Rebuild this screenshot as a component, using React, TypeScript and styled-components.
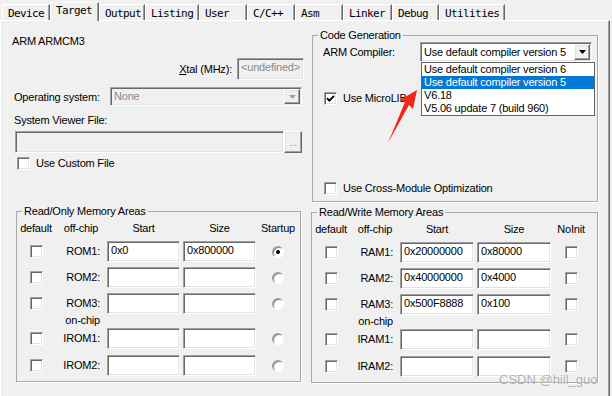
import React from "react";
import styled, { createGlobalStyle, css } from "styled-components";

const GlobalStyle = createGlobalStyle`
  html, body { margin: 0; padding: 0; background: #f0f0f0; }
  body {
    font-family: "Liberation Sans", Arial, sans-serif;
    font-size: 11px;
    letter-spacing: -0.2px;
    color: #000;
  }
  * { box-sizing: border-box; }
`;

const sunken = css`
  border: 1px solid;
  border-color: #a0a0a0 #fff #fff #a0a0a0;
  box-shadow: inset 1px 1px 0 #696969, inset -1px -1px 0 #e3e3e3;
`;

const raised = css`
  border: 1px solid;
  border-color: #fff #696969 #696969 #fff;
  box-shadow: inset -1px -1px 0 #a0a0a0, inset 1px 1px 0 #e3e3e3;
`;

const Window = styled.div`
  position: relative;
  width: 612px;
  height: 396px;
  overflow: hidden;
  background: #f0f0f0;
  display: flex;
  flex-direction: column;
`;

const TabBar = styled.div`
  display: flex;
  align-items: flex-end;
  height: 20px;
  padding-left: 2px;
  position: relative;
  z-index: 1;
`;

const Tab = styled.div<{ $w: number; $active?: boolean }>`
  width: ${(p) => p.$w}px;
  height: ${(p) => (p.$active ? 19 : 16)}px;
  margin-bottom: ${(p) => (p.$active ? -1 : 0)}px;
  padding: ${(p) => (p.$active ? 0 : 1)}px 0 0 5px;
  border-top: 1px solid #fff;
  border-left: 1px solid #fff;
  border-right: 1px solid #696969;
  box-shadow: inset -1px 0 0 #a0a0a0;
  background: #f0f0f0;
  font-family: "DejaVu Sans Mono", monospace;
  font-size: 11px;
  letter-spacing: -0.6px;
  line-height: 15px;
  white-space: nowrap;
`;

const Panel = styled.div`
  flex: 1;
  width: 610px;
  border-top: 1px solid #fff;
  border-left: 1px solid #fff;
  border-right: 1px solid #696969;
  box-shadow: inset -1px 0 0 #a0a0a0;
  display: grid;
  grid-template-columns: 305px 303px;
  grid-template-rows: 184px 1fr;
`;

const Section = styled.div<{ $pt: number; $pl: number }>`
  padding-top: ${(p) => p.$pt}px;
  padding-left: ${(p) => p.$pl}px;
  display: flex;
  flex-direction: column;
  align-items: flex-start;
`;

const Text = styled.div<{ $mt?: number; $pl?: number }>`
  margin-top: ${(p) => p.$mt ?? 0}px;
  padding-left: ${(p) => p.$pl ?? 0}px;
  line-height: 13px;
  height: 13px;
  white-space: nowrap;
`;

const XtalRow = styled.div`
  margin-top: 10px;
  align-self: stretch;
  display: flex;
  justify-content: flex-end;
  align-items: center;
  gap: 5px;
  padding-right: 2px;
  height: 22px;
`;

const FieldRow = styled.div<{ $mt: number; $pl: number; $h: number }>`
  margin-top: ${(p) => p.$mt}px;
  padding-left: ${(p) => p.$pl}px;
  height: ${(p) => p.$h}px;
  display: flex;
  align-items: center;
`;

const Label = styled.span<{ $w?: number }>`
  display: inline-block;
  width: ${(p) => (p.$w ? `${p.$w}px` : "auto")};
  white-space: nowrap;
`;

const Edit = styled.div<{ $w: number; $h: number; $disabled?: boolean }>`
  ${sunken};
  width: ${(p) => p.$w}px;
  height: ${(p) => p.$h}px;
  background: ${(p) => (p.$disabled ? "#f0f0f0" : "#fff")};
  color: ${(p) => (p.$disabled ? "#8a8a8a" : "#000")};
  padding: 2px 0 0 3px;
  line-height: 13px;
  white-space: nowrap;
  overflow: hidden;
`;

const BrowseButton = styled.div`
  ${raised};
  width: 18px;
  height: 22px;
  background: #f0f0f0;
  color: #9a9a9a;
  text-align: center;
  line-height: 22px;
  font-size: 10px;
`;

const Combo = styled.div<{ $w: number; $h: number; $disabled?: boolean }>`
  ${sunken};
  position: relative;
  width: ${(p) => p.$w}px;
  height: ${(p) => p.$h}px;
  display: flex;
  align-items: center;
  background: ${(p) => (p.$disabled ? "#f0f0f0" : "#fff")};
  color: ${(p) => (p.$disabled ? "#8a8a8a" : "#000")};
  padding: 0 1px 0 3px;
`;

const ComboText = styled.span`
  flex: 1;
  white-space: nowrap;
  overflow: hidden;
  line-height: 13px;
`;

const ComboButton = styled.div<{ $h: number }>`
  ${raised};
  width: 16px;
  height: ${(p) => p.$h}px;
  background: #f0f0f0;
  display: flex;
  align-items: center;
  justify-content: center;
`;

const DropList = styled.div`
  position: absolute;
  top: calc(100% + 1px);
  left: 0;
  width: 174px;
  border: 1px solid #646464;
  background: #fff;
  color: #000;
  z-index: 5;
`;

const DropItem = styled.div<{ $sel?: boolean }>`
  height: 13px;
  line-height: 12px;
  padding-left: 2px;
  white-space: nowrap;
  background: ${(p) => (p.$sel ? "#0078d7" : "#fff")};
  color: ${(p) => (p.$sel ? "#fff" : "#000")};
`;

const CheckRow = styled.div<{ $mt: number; $pl: number }>`
  margin-top: ${(p) => p.$mt}px;
  padding-left: ${(p) => p.$pl}px;
  display: flex;
  align-items: center;
  gap: 6px;
  height: 13px;
  line-height: 13px;
  white-space: nowrap;
`;

const CheckBoxBox = styled.span`
  ${sunken};
  width: 13px;
  height: 13px;
  background: #fff;
  display: inline-flex;
  align-items: center;
  justify-content: center;
  flex: none;
`;

const RadioBox = styled.span`
  width: 12px;
  height: 12px;
  border-radius: 50%;
  border: 1px solid;
  border-color: #a0a0a0 #fff #fff #a0a0a0;
  box-shadow: inset 1px 1px 0 #808080;
  background: #fff;
  display: inline-flex;
  align-items: center;
  justify-content: center;
`;

const RadioDot = styled.span`
  width: 4px;
  height: 4px;
  border-radius: 50%;
  background: #000;
`;

const Group = styled.fieldset<{ $w: number; $mt?: number }>`
  width: ${(p) => p.$w}px;
  min-width: 0;
  margin: ${(p) => p.$mt ?? 0}px 0 0 0;
  padding: 0;
  border: 1px solid #a9a9a9;
  box-shadow: 1px 1px 0 #fff;
`;

const Legend = styled.legend`
  margin-left: 5px;
  padding: 0 2px;
  line-height: 13px;
  height: 13px;
  white-space: nowrap;
`;

const GroupBody = styled.div<{ $pl?: number; $pb?: number }>`
  padding-left: ${(p) => p.$pl ?? 0}px;
  padding-bottom: ${(p) => p.$pb ?? 0}px;
  display: flex;
  flex-direction: column;
`;

const MemRow = styled.div<{ $cols: string; $h: number; $mt: number }>`
  display: grid;
  grid-template-columns: ${(p) => p.$cols};
  column-gap: 3px;
  align-items: center;
  height: ${(p) => p.$h}px;
  margin-top: ${(p) => p.$mt}px;
`;

const HeadCell = styled.div`
  text-align: center;
  line-height: 13px;
  white-space: nowrap;
`;

const RowLabel = styled.div`
  text-align: right;
  padding-right: 4px;
  line-height: 13px;
  white-space: nowrap;
`;

const Center = styled.div`
  display: flex;
  justify-content: center;
`;

const MemEdit = styled.div`
  ${sunken};
  height: 21px;
  background: #fff;
  padding: 2px 0 0 3px;
  line-height: 13px;
  white-space: nowrap;
  overflow: hidden;
`;

const ArrowSvg = styled.svg`
  position: absolute;
  left: 384px;
  top: 86px;
  width: 40px;
  height: 62px;
  pointer-events: none;
  z-index: 10;
`;

const Watermark = styled.div`
  position: absolute;
  left: 499px;
  top: 372px;
  font-size: 13px;
  letter-spacing: 0;
  line-height: 16px;
  color: rgba(150, 150, 150, 0.75);
  text-shadow: 0 0 1px rgba(255, 255, 255, 0.9);
  white-space: nowrap;
  z-index: 10;
`;

const Check = ({ checked }: { checked?: boolean }) => (
  <CheckBoxBox>
    {checked && (
      <svg width="9" height="9" viewBox="0 0 9 9">
        <polyline points="1,4.2 3.4,6.6 8,1.8" fill="none" stroke="#000" strokeWidth="1.9" />
      </svg>
    )}
  </CheckBoxBox>
);

const Radio = ({ checked }: { checked?: boolean }) => <RadioBox>{checked && <RadioDot />}</RadioBox>;

const DownArrow = ({ color }: { color: string }) => (
  <svg width="7" height="4" viewBox="0 0 7 4">
    <polygon points="0,0 7,0 3.5,4" fill={color} />
  </svg>
);

type MemEntry = { label: string; start?: string; size?: string; flag?: boolean };

const tabs = [
  { label: "Device", w: 48 },
  { label: "Target", w: 49 },
  { label: "Output", w: 46 },
  { label: "Listing", w: 54 },
  { label: "User", w: 48 },
  { label: "C/C++", w: 48 },
  { label: "Asm", w: 48 },
  { label: "Linker", w: 49 },
  { label: "Debug", w: 47 },
  { label: "Utilities", w: 66 },
];

const MemoryGroup = ({
  title,
  w,
  mt,
  cols,
  lastHeader,
  kind,
  offChip,
  onChip,
}: {
  title: string;
  w: number;
  mt?: number;
  cols: string;
  lastHeader: string;
  kind: "radio" | "check";
  offChip: MemEntry[];
  onChip: MemEntry[];
}) => {
  const row = (e: MemEntry, mtop: number) => (
    <MemRow key={e.label} $cols={cols} $h={21} $mt={mtop}>
      <Center>
        <Check />
      </Center>
      <RowLabel>{e.label}</RowLabel>
      <MemEdit>{e.start ?? ""}</MemEdit>
      <MemEdit>{e.size ?? ""}</MemEdit>
      <Center>{kind === "radio" ? <Radio checked={e.flag} /> : <Check checked={e.flag} />}</Center>
    </MemRow>
  );
  return (
    <Group $w={w} $mt={mt}>
      <Legend>{title}</Legend>
      <GroupBody $pb={5}>
        <MemRow $cols={cols} $h={13} $mt={4}>
          <HeadCell>default</HeadCell>
          <HeadCell>off-chip</HeadCell>
          <HeadCell>Start</HeadCell>
          <HeadCell>Size</HeadCell>
          <HeadCell>{lastHeader}</HeadCell>
        </MemRow>
        {offChip.map((e, i) => row(e, i === 0 ? 6 : 5))}
        <MemRow $cols={cols} $h={13} $mt={0}>
          <span />
          <RowLabel>on-chip</RowLabel>
        </MemRow>
        {onChip.map((e, i) => row(e, i === 0 ? 1 : 6))}
      </GroupBody>
    </Group>
  );
};

export default function App() {
  return (
    <>
      <GlobalStyle />
      <Window>
        <TabBar>
          {tabs.map((t) => (
            <Tab key={t.label} $w={t.w} $active={t.label === "Target"}>
              {t.label}
            </Tab>
          ))}
        </TabBar>
        <Panel>
          <Section $pt={14} $pl={11}>
            <Text>ARM ARMCM3</Text>
            <XtalRow>
              <Label>
                <u>X</u>tal (MHz):
              </Label>
              <Edit $w={67} $h={22} $disabled>
                &lt;undefined&gt;
              </Edit>
            </XtalRow>
            <FieldRow $mt={7} $pl={2} $h={19}>
              <Label $w={96}>Operating system:</Label>
              <Combo $w={192} $h={19} $disabled>
                <ComboText>None</ComboText>
                <ComboButton $h={15}>
                  <DownArrow color="#a0a0a0" />
                </ComboButton>
              </Combo>
            </FieldRow>
            <Text $mt={8} $pl={2}>
              System Viewer File:
            </Text>
            <FieldRow $mt={4} $pl={3} $h={22}>
              <Edit $w={269} $h={22} $disabled />
              <BrowseButton>...</BrowseButton>
            </FieldRow>
            <CheckRow $mt={4} $pl={5}>
              <Check />
              Use Custom File
            </CheckRow>
          </Section>

          <Section $pt={8} $pl={6}>
            <Group $w={286}>
              <Legend>Code Generation</Legend>
              <GroupBody $pl={10} $pb={6}>
                <FieldRow $mt={0} $pl={0} $h={20}>
                  <Label $w={97}>ARM Compiler:</Label>
                  <Combo $w={172} $h={20}>
                    <ComboText>Use default compiler version 5</ComboText>
                    <ComboButton $h={16}>
                      <DownArrow color="#000" />
                    </ComboButton>
                    <DropList>
                      <DropItem>Use default compiler version 6</DropItem>
                      <DropItem $sel>Use default compiler version 5</DropItem>
                      <DropItem>V6.18</DropItem>
                      <DropItem>V5.06 update 7 (build 960)</DropItem>
                    </DropList>
                  </Combo>
                </FieldRow>
                <CheckRow $mt={30} $pl={1}>
                  <Check checked />
                  Use MicroLIB
                </CheckRow>
                <CheckRow $mt={77} $pl={1}>
                  <Check />
                  Use Cross-Module Optimization
                </CheckRow>
              </GroupBody>
            </Group>
          </Section>

          <Section $pt={0} $pl={15}>
            <MemoryGroup
              title="Read/Only Memory Areas"
              w={285}
              cols="38px 46px 73px 73px 38px"
              lastHeader="Startup"
              kind="radio"
              offChip={[
                { label: "ROM1:", start: "0x0", size: "0x800000", flag: true },
                { label: "ROM2:" },
                { label: "ROM3:" },
              ]}
              onChip={[{ label: "IROM1:" }, { label: "IROM2:" }]}
            />
          </Section>

          <Section $pt={0} $pl={5}>
            <MemoryGroup
              title="Read/Write Memory Areas"
              w={287}
              mt={1}
              cols="38px 44px 74px 74px 34px"
              lastHeader="NoInit"
              kind="check"
              offChip={[
                { label: "RAM1:", start: "0x20000000", size: "0x80000" },
                { label: "RAM2:", start: "0x40000000", size: "0x4000" },
                { label: "RAM3:", start: "0x500F8888", size: "0x100" },
              ]}
              onChip={[{ label: "IRAM1:" }, { label: "IRAM2:" }]}
            />
          </Section>
        </Panel>

        <ArrowSvg viewBox="0 0 40 62">
          <polygon points="33,4 16,14 21,16 4,57 25,19 29,23" fill="#f2261b" />
        </ArrowSvg>
        <Watermark>CSDN @hill_guo</Watermark>
      </Window>
    </>
  );
}
